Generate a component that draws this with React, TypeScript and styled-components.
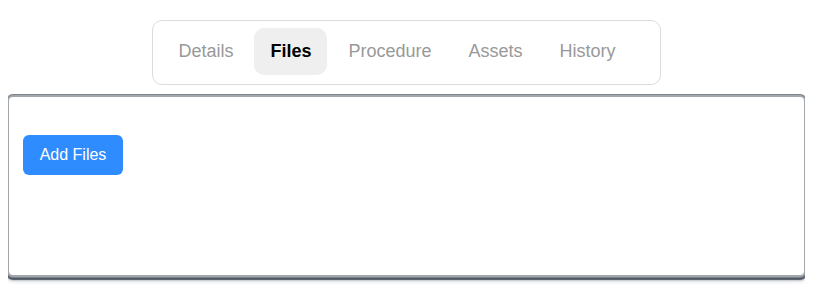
import styled, { createGlobalStyle } from "styled-components";

const GlobalStyle = createGlobalStyle`
  html, body {
    min-height: 100%;
  }
  body {
    margin: 8px;
    background: #ffffff;
    font-family: "Liberation Sans", Arial, sans-serif;
  }
`;

const Page = styled.div`
  padding-bottom: 20px;
`;

const TabsWrap = styled.div`
  display: flex;
  justify-content: center;
  margin-top: 12px;
  margin-bottom: 10px;
`;

const TabBar = styled.nav`
  display: flex;
  gap: 5px;
  padding: 7px 28px 9px 9px;
  border: 1px solid #dcdcdc;
  border-radius: 10px;
  background: #fff;
`;

const Tab = styled.button<{ $active?: boolean }>`
  border: none;
  background: ${(p) => (p.$active ? "#efefef" : "transparent")};
  color: ${(p) => (p.$active ? "#000" : "#999")};
  font-family: "Liberation Sans", Arial, sans-serif;
  font-size: 18px;
  font-weight: ${(p) => (p.$active ? 700 : 400)};
  line-height: 21px;
  padding: 13px 16px;
  border-radius: 10px;
  cursor: pointer;
`;

const Panel = styled.section`
  box-sizing: border-box;
  height: 182px;
  margin: 0 -1px;
  padding: 38px 14px;
  border: 2px solid #a2a7ac;
  border-radius: 6px;
  box-shadow: 0 0 0 1px #7d848c, 0 2px 1px 1px #4f5966, 0 3px 4px rgba(50, 60, 75, 0.45);
  background: #fff;
`;

const AddButton = styled.button`
  height: 40px;
  width: 100px;
  border: none;
  border-radius: 6px;
  background: #2f8cff;
  color: #fff;
  font-family: "Liberation Sans", Arial, sans-serif;
  font-size: 16px;
  cursor: pointer;
`;

const tabs = ["Details", "Files", "Procedure", "Assets", "History"];

export default function App() {
  return (
    <Page>
      <GlobalStyle />
      <TabsWrap>
        <TabBar>
          {tabs.map((t) => (
            <Tab key={t} $active={t === "Files"}>
              {t}
            </Tab>
          ))}
        </TabBar>
      </TabsWrap>
      <Panel>
        <AddButton>Add Files</AddButton>
      </Panel>
    </Page>
  );
}
